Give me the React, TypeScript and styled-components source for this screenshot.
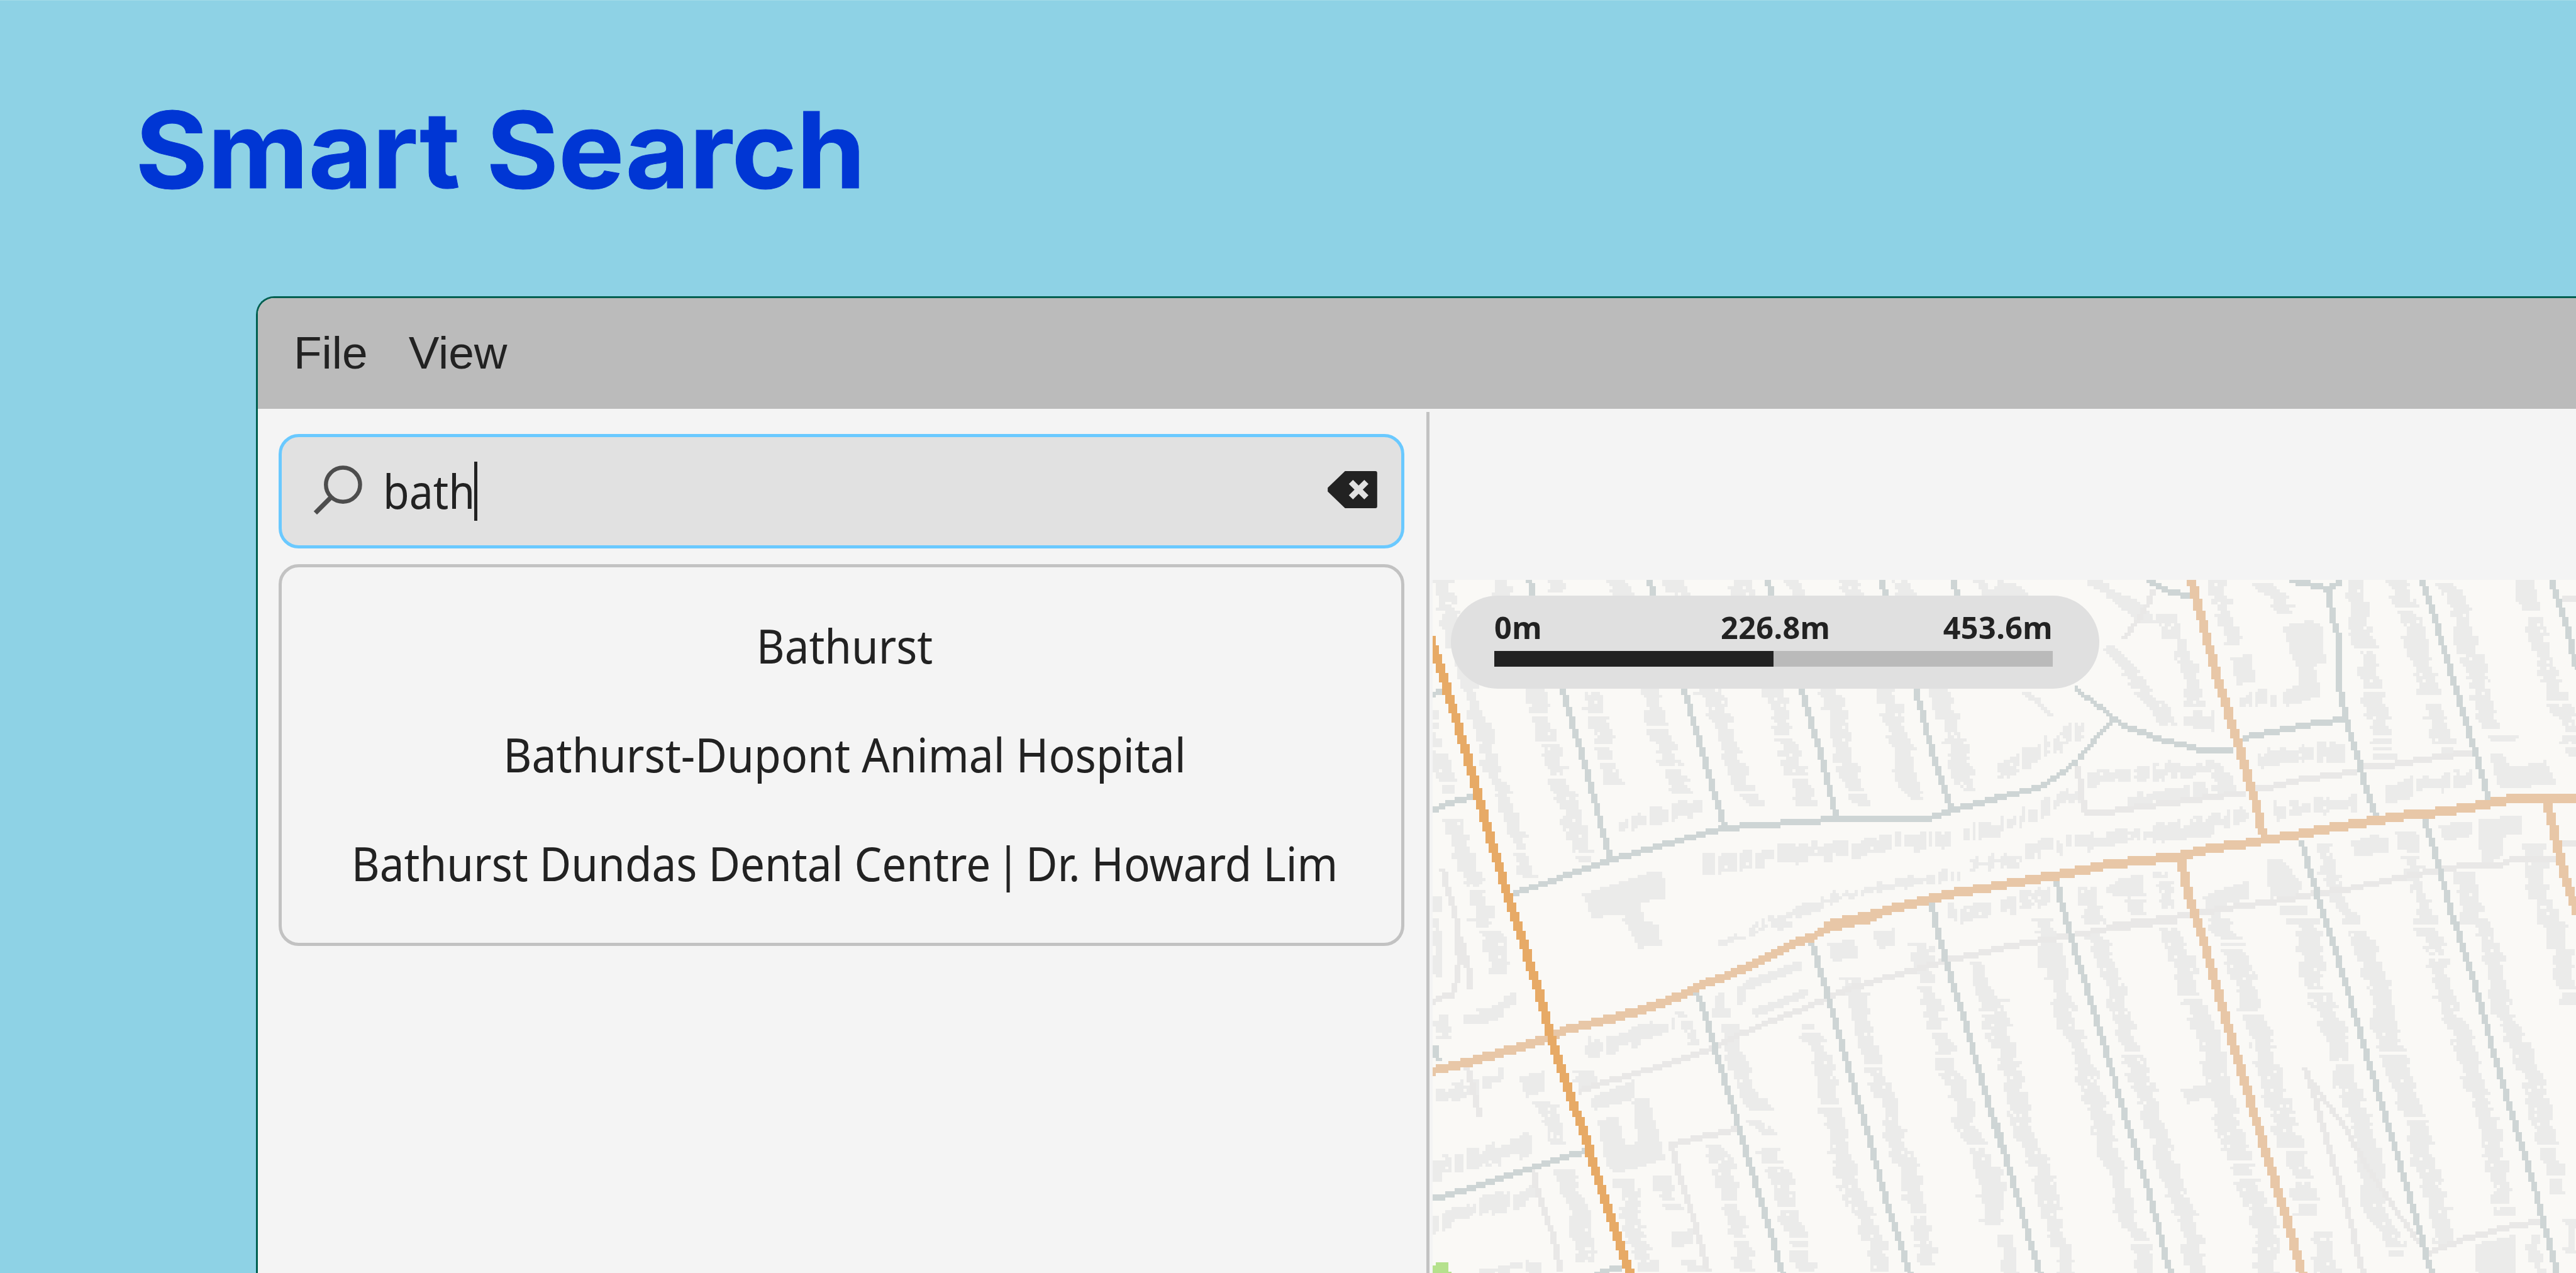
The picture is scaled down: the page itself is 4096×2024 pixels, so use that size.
import React from "react";
import styled, { createGlobalStyle } from "styled-components";

const GlobalStyle = createGlobalStyle`
  html, body { margin: 0; padding: 0; background: #8ed2e5; overflow: hidden; }
  *, *::before, *::after { box-sizing: border-box; }
`;

/* ------------------------------------------------------------------ */
/* Street map: vector data rasterised onto a coarse, unsmoothed grid   */
/* ------------------------------------------------------------------ */

const COLS = 369;
const ROWS = 224;
const CELL = 4.934;

type Point = [number, number];
type Sheet = {
  ox: number;
  oy: number;
  sx: number;
  sy: number;
  areas: string[];
  /* [width in cells, points]: rows of houses along a street */
  steep: [number, string][];
  flat: [number, string][];
  lanes: string[];
  streets: string[];
  avenues: string[];
  highway: string[];
};

const northWest: Sheet = {
  ox: -2.73, oy: -2.54, sx: 8.428, sy: 13.78,
  areas: [
    "430,1430 515,1385 615,1330 650,1330 655,1450 585,1470 600,1568 550,1568 540,1520 455,1535 445,1490",
    "705,545 790,520 790,555",
  ],
  steep: [
    [5, "50,35 60,130 75,250 105,400 130,560 160,700 190,900 235,1060 265,1240 290,1360"],
    [6, "205,35 225,105"], [5, "350,35 365,95"], [5, "520,35 545,105"], [6, "680,35 700,105"],
    [6, "855,35 870,105"], [5, "1000,35 1020,105"], [6, "1150,35 1185,105"], [5, "1300,35 1310,105"], [4, "1510,35 1530,105"],
    [6, "305,520 330,720 365,900 400,1060 415,1180 435,1290"],
    [6, "450,520 480,700 500,850 530,950"],
    [6, "615,520 640,700 670,850 705,980"],
    [6, "780,520 810,680 830,800 850,880 870,980 905,1045"],
    [6, "950,520 980,720 1005,860 1040,1045"],
    [6, "1100,520 1130,700 1150,850 1175,960 1200,1045"],
    [6, "1255,520 1280,660 1300,780 1310,900 1340,1020"],
    [6, "1405,520 1440,740 1465,900 1485,990"],
    [3, "23,600 30,800"], [5, "35,800 60,920 65,980"],
    [6, "85,1090 100,1190 120,1320 150,1450 165,1568"],
    [2, "28,1440 30,1568"],
  ],
  flat: [
    [5, "525,1130 650,1080 755,1045"],
    [5, "760,1300 900,1265 1100,1235 1300,1200 1430,1175"],
    [4, "1465,1155 1568,1130"],
    [3, "890,1568 1050,1480 1200,1410 1300,1385 1455,1345"],
    [3, "1485,1305 1568,1280"],
    [5, "1410,1515 1540,1500"],
  ],
  lanes: ["50,1320 62,1400 80,1500 90,1568"],
  streets: [
    "285,35 376,518 434,845 505,1270", "612,35 706,518 765,850 815,1130", "932,35 1025,518 1075,800 1119,1090",
    "1240,35 1333,518 1390,850 1431,1055", "1437,35 1448,105", "23,545 52,522", "23,1057 65,1030 145,992",
    "241,1428 300,1397 505,1280 700,1190 815,1136 1025,1110 1119,1096 1370,1094 1431,1060 1568,1000",
    "1380,1475 1393,1568",
  ],
  avenues: ["1085,1572 1180,1535 1300,1485 1430,1430 1568,1390"],
  highway: ["-3,195 53,475 70,565 123,850 150,1010 190,1240 253,1568"],
};

const northEast: Sheet = {
  ox: 181.5, oy: -2.54, sx: 8.379, sy: 13.78,
  areas: [
    "-20,105 10,35 60,60 95,105", "635,380 690,365 700,490 650,500",
    "775,240 850,215 880,240 890,400 860,420 880,550 780,600 775,530 815,500 815,420 800,390",
    "1405,40 1450,40 1475,170 1430,180 1405,130",
    "1330,730 1410,725 1400,755 1340,755",
    "1335,810 1370,810 1385,860 1435,860 1435,850 1485,840 1515,940 1360,965",
    "1195,1120 1290,1110 1280,1180 1210,1190",
    "1300,1100 1420,1080 1420,1160 1370,1175 1365,1280 1310,1285",
    "960,1200 1020,1165 1060,1180 1060,1250 970,1260",
    "730,1270 770,1270 790,1310 825,1380 820,1430 740,1450",
    "560,1440 680,1370 680,1450 570,1500", "300,1400 340,1355 395,1345 395,1420 360,1450 300,1430",
    "430,1170 590,1100 590,1170 450,1200",
  ],
  steep: [
    [6, "270,40 340,110 400,190 420,230"], [6, "465,190 475,290"], [5, "500,300 520,430 535,600"],
    [5, "600,40 610,140 630,220 650,330"], [6, "710,40 760,110 790,200"],
    [6, "980,40 980,180 985,250 1010,380 1020,560 1040,700 1050,830"],
    [6, "1080,40 1110,150 1130,280 1160,430 1170,550"], [6, "1175,580 1200,700 1220,800"],
    [6, "1220,40 1250,130 1265,270 1290,400 1310,530 1340,690"],
    [6, "1450,190 1460,280 1490,400 1510,540 1550,680 1560,820"],
    [5, "305,320 340,400 390,500 440,600 460,680"], [4, "90,530 150,640"],
    [5, "890,1210 900,1330 920,1420 970,1568"], [5, "1110,1150 1130,1320 1140,1400 1170,1568"],
    [5, "450,1330 470,1500"], [5, "240,1400 260,1500 270,1568"], [6, "1270,1330 1290,1568"],
    [6, "1455,1210 1465,1400 1500,1568"], [5, "380,1430 385,1530"], [7, "800,1480 820,1568"], [4, "600,1510 610,1568"],
  ],
  flat: [
    [5, "650,575 755,560"], [5, "500,660 590,660"], [6, "5,880 80,820 120,790 240,690"],
    [4, "240,930 400,890 570,870 640,920"], [4, "350,1020 540,970 650,950"], [4, "0,1130 80,1080 240,970"],
    [4, "80,1235 300,1190 500,1140 680,1080"], [4, "0,1300 70,1280"],
    [5, "705,840 830,800 945,800"], [5, "740,1070 850,1050 980,1020"], [5, "1050,985 1150,945 1290,910"],
    [5, "0,1490 150,1435"],
  ],
  lanes: [
    "425,70 415,130 385,210 350,290", "222,860 232,990 245,1080", "245,1068 320,1063 380,1045 500,1020 560,1005 675,978",
    "700,958 750,952 830,920 970,888 1000,862 1070,857 1150,835 1285,802", "1530,118 1568,118",
    "315,1568 430,1545 600,1500 800,1450 880,1425 950,1410 1080,1360 1180,1330 1240,1310 1360,1300 1390,1280 1510,1272",
    "1530,1205 1568,1205",
  ],
  streets: [
    "410,38 465,85 520,105", "790,38 830,45 897,75 938,42", "899,70 902,140 914,240 925,290 928,520 942,620 950,680 985,860 1000,960 1026,1080",
    "1152,35 1180,180 1240,500 1290,780 1320,940 1327,1010", "1500,35 1540,230 1568,430",
    "210,510 318,648 345,680 430,735 520,775 550,792 640,792", "318,648 270,740 225,830 200,870 125,950 60,980 -8,1010",
    "665,738 740,712 830,682 945,652", "823,1190 850,1330 875,1470 895,1568", "1158,1095 1190,1270 1240,1568", "163,1370 177,1470 197,1568",
  ],
  avenues: [
    "527,35 560,235 600,480 650,740 700,1020 722,1170",
    "-10,1397 170,1345 310,1297 420,1278 500,1262 570,1232 660,1210 750,1183 850,1155 930,1128 1000,1110 1100,1083 1190,1068 1290,1042 1370,1015 1420,1005 1580,1005",
    "500,1270 515,1400 545,1568", "1489,1025 1510,1170 1535,1340 1572,1530",
  ],
  highway: [],
};

const southWest: Sheet = {
  ox: -2.73, oy: 109.45, sx: 8.428, sy: 13.757,
  areas: [
    "540,0 595,0 635,20 645,115 580,128 560,50", "1095,110 1170,85 1180,165 1110,190", "1215,50 1280,40 1280,110 1235,135",
    "450,790 575,710 565,800 460,845", "260,700 330,670 330,760 275,790",
    "470,890 525,870 545,995 580,990 565,800 610,790 655,1060 520,1130 495,1090",
    "670,1380 730,1375 730,1440 675,1450",
    "870,270 1025,180 1025,220 880,315", "890,400 1045,300 1045,340 900,435",
  ],
  steep: [
    [6, "150,0 190,80 195,180 215,240"], [2, "33,0 30,250"], [4, "45,420 60,530"], [4, "810,330 810,440"],
    [6, "1350,100 1365,300 1390,470 1410,560 1430,680 1460,800 1460,900 1500,1000 1520,1100 1540,1300 1545,1350"],
    [6, "1500,180 1520,300 1540,460 1560,560"],
    [6, "1150,250 1180,330 1180,430 1210,560 1235,700 1265,820 1280,960 1310,1080 1330,1230 1355,1370 1370,1540"],
    [6, "1040,460 1070,570 1090,700 1100,820 1120,960 1140,1080 1160,1200 1200,1330 1225,1420 1240,1568"],
    [6, "820,460 850,600 875,730 920,850"], [6, "900,890 945,960"], [6, "930,1010 975,1150 980,1280 1010,1400 1040,1568"],
    [6, "770,980 810,1060 830,1200 840,1320 860,1430 880,1568"],
    [6, "430,670 450,750"], [6, "330,810 350,900 370,1000"], [6, "375,1110 400,1200 430,1300 430,1400 450,1520"],
    [6, "545,1150 565,1280 570,1400 600,1500 610,1568"], [5, "655,1140 655,1200 680,1290"], [6, "725,1510 730,1568"],
    [4, "700,400 735,560"],
  ],
  flat: [
    [2, "795,108 870,70 940,25 1000,5"], [4, "95,440 180,415 255,350"], [5, "435,575 550,530 680,470"],
    [4, "30,780 120,750 220,690"], [6, "25,1110 150,1060 290,990"], [5, "25,1345 120,1290 300,1210"],
    [3, "150,1555 320,1540"], [4, "840,340 880,320"],
  ],
  lanes: [
    "93,0 95,190 82,320", "82,330 45,345 23,375", "98,80 120,210 125,305", "118,655 135,760 150,870",
    "415,765 480,728 560,690 640,650 740,598 790,565 860,510 940,450 1030,395 1100,345 1170,300 1260,255 1350,215 1420,180 1568,130",
    "665,1000 740,970 850,930", "672,1000 690,1120 730,1310 773,1568", "293,1100 310,1220 350,1400 373,1568",
  ],
  streets: [
    "742,325 765,430 790,570 830,790 870,1000 910,1220 950,1440 973,1575", "1053,105 1100,360 1150,640 1200,920 1260,1270 1320,1575",
    "1387,0 1420,200 1470,460 1520,740 1568,1010", "27,560 40,632", "23,1240 100,1205 200,1150 290,1105 350,1070 440,1025", "465,1575 540,1540",
  ],
  avenues: [
    "15,675 100,640 220,585 300,545 380,493 480,450 600,398 700,335 765,285 850,230 930,170 1010,105 1060,75 1095,38 1150,15 1230,-12",
  ],
  highway: ["247,-10 305,285 350,550 400,790 440,980 480,1190 530,1430 560,1580"],
};

const southEast: Sheet = {
  ox: 181.5, oy: 109.45, sx: 8.379, sy: 13.757,
  areas: ["500,750 580,735 600,770 520,815", "1290,1440 1400,1400 1400,1575 1300,1575", "110,120 180,110 180,215 112,220"],
  steep: [
    [6, "130,0 150,150 170,280 200,480 235,600 250,720 280,850 300,1000 330,1150 350,1300 390,1420 400,1575"],
    [6, "265,50 300,200 330,350 350,500 375,640 410,780 430,900 460,1050 490,1200 520,1340 540,1500 545,1575"],
    [7, "460,30 500,150 520,300 560,450 590,620 600,740 620,850 640,980 670,1120 700,1230 730,1380 725,1575"],
    [7, "600,0 640,100 670,250 690,400 720,540 740,680 760,800 780,920 810,1040 830,1160 840,1320"],
    [7, "880,1380 890,1470 900,1575"],
    [7, "840,0 850,150 860,300 900,430 930,560 940,700 970,830 1000,950 1010,1080 1020,1250 1060,1380 1090,1500"],
    [7, "980,50 1010,180 1040,330 1050,480 1080,620 1110,760 1130,870 1150,1020 1170,1150 1200,1290 1210,1440"],
    [6, "1150,0 1190,120 1200,260 1220,400 1260,520 1280,660 1310,800 1330,900 1340,1000 1360,1130 1380,1320"],
    [6, "1310,0 1340,130 1360,280 1370,400 1400,500 1430,620 1460,750 1470,850 1490,960 1500,1080 1520,1220"],
    [6, "1505,0 1530,150 1550,380"], [4, "1550,1330 1560,1480"], [4, "1450,1390 1470,1575"],
    [6, "5,350 15,500 30,600 50,750 70,880 95,1020 130,1100 140,1250 160,1380 185,1450 190,1575"],
    [5, "20,1380 50,1575"], [4, "0,1100 5,1340"],
  ],
  flat: [],
  lanes: [
    "-8,132 100,100 210,70 300,42 400,20 490,0", "836,655 860,780 890,960 930,1180 960,1350 992,1575",
    "836,680 880,780 950,940 1000,1090 1060,1240 1150,1450", "1165,1478 1260,1420 1380,1365 1490,1335",
  ],
  streets: [
    "188,-5 240,270 300,600 355,900 410,1190 473,1575", "890,-5 940,260 1000,590 1060,920 1110,1180 1177,1575",
    "1237,-5 1290,270 1350,620 1410,950 1460,1220 1517,1575", "0,900 60,1240 120,1575",
  ],
  avenues: ["543,-5 600,320 660,660 720,980 780,1300 829,1580"],
  highway: [],
};

const sheets = [northWest, northEast, southWest, southEast];

const palette = ["", "#ebebea", "#e9e8e7", "#ced5d5", "#e8c7a7", "#e7aa66", "#b5e18d"];

const hash = (a: number, b: number) => {
  const v = Math.sin(a * 127.1 + b * 311.7) * 43758.5453;
  return v - Math.floor(v);
};

const project = (sheet: Sheet, text: string): Point[] =>
  text.split(" ").map((pair) => {
    const [x, y] = pair.split(",").map(Number);
    return [sheet.ox + x / sheet.sx, sheet.oy + y / sheet.sy];
  });

function rasterise(): string[] {
  const grid = new Uint8Array(COLS * ROWS);
  const plot = (x: number, y: number, ink: number) => {
    if (x >= 0 && y >= 0 && x < COLS && y < ROWS) grid[y * COLS + x] = ink;
  };

  const line = (pts: Point[], width: number, ink: number) => {
    for (let i = 1; i < pts.length; i++) {
      const [ax, ay] = pts[i - 1];
      const [bx, by] = pts[i];
      const steep = Math.abs(by - ay) > Math.abs(bx - ax);
      const [u0, v0, u1, v1] = steep ? [ay, ax, by, bx] : [ax, ay, bx, by];
      const lo = Math.round(Math.min(u0, u1));
      const hi = Math.max(lo + 1, Math.round(Math.max(u0, u1)));
      for (let u = lo; u < hi; u++) {
        const v = v0 + ((u + 0.5 - u0) / (u1 - u0 || 1)) * (v1 - v0);
        const start = Math.round(v - width / 2);
        for (let k = 0; k < width; k++) steep ? plot(start + k, u, ink) : plot(u, start + k, ink);
      }
    }
  };

  const houses = (pts: Point[], width: number, steep: boolean, seed: number) => {
    const p = pts.map(([x, y]) => (steep ? [y, x] : [x, y]));
    const first = Math.round(p[0][0]);
    const last = Math.round(p[p.length - 1][0]);
    let next = first;
    let left = 0;
    let right = 0;
    let gap = false;
    for (let u = first; u < last; u++) {
      if (u >= next) {
        const r = hash(u, seed);
        gap = !gap && r > (steep ? 0.9 : 0.62);
        next = u + (gap ? 1 : 1 + Math.floor(hash(seed, u) * 3.6));
        left = Math.round(hash(u + 3, seed + 9) * 2.6 - 1.3);
        right = Math.round(hash(u + 7, seed + 5) * 2.6 - 1.3);
      }
      let i = 1;
      while (i < p.length - 1 && p[i][0] < u) i++;
      const v = p[i - 1][1] + ((u - p[i - 1][0]) / (p[i][0] - p[i - 1][0])) * (p[i][1] - p[i - 1][1]);
      if (gap && hash(u, seed + 2) > 0.3) continue;
      const from = Math.round(v - width / 2) + left;
      const to = Math.round(v + width / 2) - right;
      for (let k = from; k < to; k++) {
        if (k > from && k < to - 1 && hash(k, u) > 0.975) continue;
        steep ? plot(k, u, 1) : plot(u, k, 1);
      }
    }
  };

  const area = (pts: Point[], ink: number) => {
    for (let y = 0; y < ROWS; y++)
      for (let x = 0; x < COLS; x++) {
        let inside = false;
        for (let i = 0, j = pts.length - 1; i < pts.length; j = i++) {
          const [xi, yi] = pts[i];
          const [xj, yj] = pts[j];
          if (yi > y + 0.5 !== yj > y + 0.5 && x + 0.5 < ((xj - xi) * (y + 0.5 - yi)) / (yj - yi) + xi) inside = !inside;
        }
        if (inside) plot(x, y, ink);
      }
  };

  sheets.forEach((s, n) => {
    s.areas.forEach((a) => area(project(s, a), 1));
    s.steep.forEach(([w, a], i) => houses(project(s, a), w, true, n * 50 + i));
    s.flat.forEach(([w, a], i) => houses(project(s, a), w, false, n * 70 + i + 20));
  });
  sheets.forEach((s) => s.lanes.forEach((a) => line(project(s, a), 2, 2)));
  sheets.forEach((s) => s.streets.forEach((a) => line(project(s, a), 2, 3)));
  sheets.forEach((s) => s.avenues.forEach((a) => line(project(s, a), 3, 4)));
  sheets.forEach((s) => s.highway.forEach((a) => line(project(s, a), 3, 5)));
  area([[1, 220], [5, 220], [5, 223], [6, 223], [6, 224], [0, 224], [0, 221], [1, 221]], 6);

  const paths = palette.map(() => "");
  for (let y = 0; y < ROWS; y++) {
    let x = 0;
    while (x < COLS) {
      const ink = grid[y * COLS + x];
      let end = x + 1;
      while (end < COLS && grid[y * COLS + end] === ink) end++;
      if (ink) paths[ink] += `M${x} ${y}h${end - x}v1h${x - end}z`;
      x = end;
    }
  }
  return paths;
}

const mapPaths = rasterise();

/* ------------------------------------------------------------------ */
/* Layout                                                              */
/* ------------------------------------------------------------------ */

const Stage = styled.main`
  display: flex;
  flex-direction: column;
  width: 4096px;
  height: 2024px;
  overflow: hidden;
  border-top: 1px solid #a3dbe9;
  background: #8ed2e5;
`;

const Headline = styled.h1`
  margin: 0;
  flex: none;
  height: 470px;
  padding: 137px 0 0 206px;
  font: 700 168px/200px Inter, "Liberation Sans", sans-serif;
  -webkit-text-stroke: 1px #0036d4;
  color: #0036d4;
  white-space: nowrap;
  transform: scaleX(1.045);
  transform-origin: left center;
`;

const AppWindow = styled.section`
  display: flex;
  flex-direction: column;
  flex: 1;
  margin-left: 407px;
  border: solid #005f50;
  border-width: 3px 0 0 3px;
  border-top-left-radius: 29px;
  overflow: hidden;
  background: #f4f4f4;
`;

const MenuBar = styled.nav`
  display: flex;
  flex: none;
  height: 176px;
  padding: 50px 0 0 57px;
  gap: 65px;
  background: #bbbbbb;
`;

const MenuItem = styled.span`
  font: 400 73px/74px "Liberation Sans", Arial, sans-serif;
  color: #222222;
`;

const Workspace = styled.div`
  display: flex;
  flex: 1;
  min-height: 0;
`;

const Sidebar = styled.aside`
  display: flex;
  flex-direction: column;
  flex: none;
  width: 1858px;
  padding: 40px 35px 0 33px;
  gap: 25px;
`;

const SearchBox = styled.div`
  display: flex;
  align-items: center;
  height: 182px;
  padding: 0 38px 6px 49px;
  border: 5px solid #6ac9ff;
  border-radius: 32px;
  background: #e1e1e1;
`;

const Query = styled.span`
  margin: 3px 0 0 33px;
  font: 400 75px/100px "Noto Sans", sans-serif;
  color: #222222;
  transform: scaleX(0.905);
  transform-origin: left center;
`;

const Caret = styled.i`
  width: 5px;
  height: 94px;
  margin: 6px 0 0 -17px;
  background: #222222;
`;

const Icon = styled.svg`
  flex: none;
  display: block;
`;

const ClearIcon = styled(Icon)`
  margin-left: auto;
`;

const Results = styled.ul`
  list-style: none;
  margin: 0;
  height: 607px;
  padding: 38px 0 0 10px;
  border: 5px solid #c2c2c2;
  border-radius: 32px;
`;

const Result = styled.li<{ $stretch: number }>`
  height: 173px;
  font: 400 75px/173px "Noto Sans", sans-serif;
  color: #222222;
  text-align: center;
  white-space: nowrap;
  transform: scaleX(${(p) => p.$stretch});
`;

const Separator = styled.span`
  word-spacing: -10px;
`;

const Divider = styled.div`
  flex: none;
  width: 5px;
  margin: 5px 5px 0 0;
  background: #c2c2c2;
`;

const MapPane = styled.div`
  position: relative;
  flex: 1;
  margin-top: 272px;
  overflow: hidden;
  background: #faf9f6;
`;

const ScaleBadge = styled.div`
  position: absolute;
  left: 29px;
  top: 25px;
  width: 1031px;
  height: 148px;
  padding: 19px 74px 0 69px;
  border-radius: 74px;
  background: #e0e0e0;
`;

const ScaleLabels = styled.div`
  display: grid;
  grid-template-columns: 360px 1fr auto;
  height: 69px;
  font: 700 48.5px/62px "Noto Sans", sans-serif;
  letter-spacing: 0.4px;
  color: #222222;
`;

const ScaleTrack = styled.div`
  width: 888px;
  height: 25px;
  background: #bababa;
`;

const ScaleFill = styled.div`
  width: 50%;
  height: 100%;
  background: #222222;
`;

const StreetMap = () => (
  <Icon width={COLS * CELL} height={ROWS * CELL} viewBox={`0 0 ${COLS} ${ROWS}`} shapeRendering="crispEdges">
    {mapPaths.map((d, i) => d && <path key={i} d={d} fill={palette[i]} />)}
  </Icon>
);

export default function App() {
  return (
    <Stage>
      <GlobalStyle />
      <Headline>Smart Search</Headline>
      <AppWindow>
        <MenuBar>
          <MenuItem>File</MenuItem>
          <MenuItem>View</MenuItem>
        </MenuBar>
        <Workspace>
          <Sidebar>
            <SearchBox>
              <Icon width="79" height="79" viewBox="0 0 16 16" fill="none" stroke="#4d4d4d">
                <circle cx="9.8" cy="6.4" r="5.5" strokeWidth="1.3" />
                <path d="M6 10.4 .9 15.5" strokeWidth="1.5" />
              </Icon>
              <Query>bath</Query>
              <Caret />
              <ClearIcon width="79" height="59" viewBox="0 0 16 12">
                <path d="M5.6 0H15.4Q16 0 16 .6V11.4Q16 12 15.4 12H5.6L0 6.6V5.4Z" fill="#222222" />
                <path d="M7.5 3.5l5 5M12.5 3.5l-5 5" stroke="#e1e1e1" strokeWidth="1.9" />
              </ClearIcon>
            </SearchBox>
            <Results>
              <Result $stretch={0.921}>Bathurst</Result>
              <Result $stretch={0.928}>Bathurst-Dupont Animal Hospital</Result>
              <Result $stretch={0.923}>
                Bathurst Dundas Dental Centre<Separator> | </Separator>Dr
                <span>.</span> Howard Lim
              </Result>
            </Results>
          </Sidebar>
          <Divider />
          <MapPane>
            <StreetMap />
            <ScaleBadge>
              <ScaleLabels>
                <span>0m</span>
                <span>226.8m</span>
                <span>453.6m</span>
              </ScaleLabels>
              <ScaleTrack>
                <ScaleFill />
              </ScaleTrack>
            </ScaleBadge>
          </MapPane>
        </Workspace>
      </AppWindow>
    </Stage>
  );
}
